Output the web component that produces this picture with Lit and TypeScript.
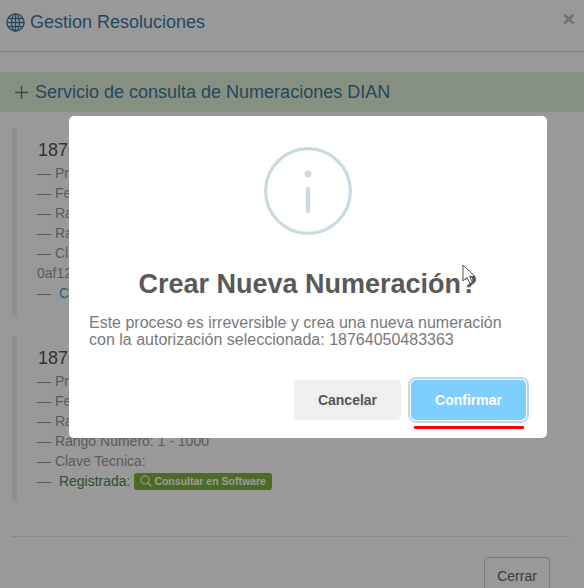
import { LitElement, html, css, svg } from "lit";
import { customElement } from "lit/decorators.js";

const FONT = css`"Liberation Sans", Arial, sans-serif`;

@customElement("app-root")
export class AppRoot extends LitElement {
  static styles = css`
    :host {
      display: block;
      position: relative;
      width: 584px;
      height: 588px;
      overflow: hidden;
      background: #fff;
      font-family: ${FONT};
      color: #999;
      font-size: 14px;
    }
    * { box-sizing: border-box; }
    .header {
      height: 52px;
      border-bottom: 1px solid #ddd;
      display: flex;
      align-items: center;
      padding: 0 9px 0 6px;
      color: #3d7ba8;
      font-size: 18px;
      gap: 5px;
    }
    .header span.t { flex: 1; margin-top: -7px; }
    .header svg { margin-top: -7px; }
    .close {
      font-size: 21px;
      font-weight: bold;
      color: #bbb;
      margin-top: -15px;
      line-height: 1;
    }
    .banner {
      margin-top: 20px;
      height: 40px;
      background: #dff0d8;
      color: #3a7a9c;
      font-size: 18px;
      display: flex;
      align-items: center;
      padding-left: 14px;
      gap: 6px;
    }
    .body { padding: 16px 12px 0; }
    .quote {
      border-left: 5px solid #eee;
      padding: 10px 0 0 20px;
      margin-bottom: 20px;
      font-size: 14px;
      line-height: 20px;
    }
    .q1 { height: 188px; }
    .q2 { height: 165px; }
    .num { font-size: 18px; line-height: 24px; color: #555; margin: 0 0 1px 1px; }
    .row { white-space: nowrap; }
    .link { color: #4a9ccc; margin-left: 4px; }
    .reg { color: #4d8a4e; margin-left: 4px; }
    .badge {
      display: inline-flex;
      align-items: center;
      gap: 2px;
      height: 17px;
      padding: 0 6px;
      background: #7fb53d;
      color: #fff;
      border-radius: 3px;
      font-size: 10.5px;
      font-weight: bold;
      position: relative;
      top: 1px;
    }
    .foot {
      margin: 35px 14px 0 12px;
      border-top: 1px solid #e5e5e5;
      padding-top: 20px;
      display: flex;
      justify-content: flex-end;
      padding-right: 20px;
    }
    .cerrar {
      width: 66px;
      height: 40px;
      border: 1px solid #ccc;
      border-radius: 4px;
      background: #fff;
      color: #666;
      font: 14px ${FONT};
      padding: 0 0 2px;
    }
    .overlay {
      position: absolute;
      inset: 0;
      background: rgba(0, 0, 0, 0.4);
    }
    .dialog {
      position: absolute;
      left: 69px;
      top: 116px;
      width: 478px;
      height: 322px;
      background: #fff;
      border-radius: 5px;
      padding: 20px 20px 0;
      display: flex;
      flex-direction: column;
    }
    .icon { display: block; flex: none; margin: 11px auto 0; }
    h2 {
      margin: 29px 0 0;
      text-align: center;
      font-size: 27px;
      line-height: 40px;
      font-weight: bold;
      color: #595959;
    }
    .msg {
      margin: 10px 0 0;
      font-size: 16px;
      line-height: 17px;
      color: #797979;
    }
    .actions {
      display: flex;
      justify-content: flex-end;
      gap: 10px;
      margin-top: 32px;
    }
    .btn {
      width: 107px;
      height: 40px;
      border: none;
      border-radius: 5px;
      font: bold 14px ${FONT};
    }
    .cancel { background: #efefef; color: #555; }
    .confirm {
      width: 115px;
      margin-right: 1px;
      background: #7ecfff;
      color: #fff;
      box-shadow: 0 0 0 1px #fff, 0 0 0 3px rgba(128, 190, 230, 0.55);
    }
    .underline {
      position: absolute;
      left: 414px;
      top: 426px;
      width: 110px;
      height: 3px;
      background: #f00;
      border-radius: 1px;
    }
    .cursor { position: absolute; left: 462px; top: 264px; }
  `;

  private globe() {
    return html`<svg width="19" height="19" viewBox="0 0 19 19" fill="none" stroke="#3d7ba8" stroke-width="1.3">
      <circle cx="9.5" cy="9.5" r="8.6"></circle>
      <ellipse cx="9.5" cy="9.5" rx="4" ry="8.6"></ellipse>
      <path d="M9.5 1v17M1 9.5h17M2 5.5h15M2 13.5h15"></path>
    </svg>`;
  }

  private plus() {
    return html`<svg width="15" height="15" viewBox="0 0 15 15" stroke="#5b8a5b" stroke-width="1.4">
      ${svg`<path d="M7.5 1v13M1 7.5h13"></path>`}
    </svg>`;
  }

  render() {
    return html`
      <div class="header">
        ${this.globe()}<span class="t">Gestion Resoluciones</span><span class="close">×</span>
      </div>
      <div class="banner">${this.plus()}<span>Servicio de consulta de Numeraciones DIAN</span></div>
      <div class="body">
        <div class="quote q1">
          <div class="num">18764050483363</div>
          <div class="row">— Prefijo: SETT</div>
          <div class="row">— Fecha: 2024-01-01</div>
          <div class="row">— Rango Factura</div>
          <div class="row">— Rango Numero: 1 - 1000</div>
          <div class="row">— Clave Tecnica:</div>
          <div class="row">0af12</div>
          <div class="row">— <span class="link">Consultar</span></div>
        </div>
        <div class="quote q2">
          <div class="num">18764050483363</div>
          <div class="row">— Prefijo: SETT</div>
          <div class="row">— Fecha: 2024-01-01</div>
          <div class="row">— Rango Factura</div>
          <div class="row">— Rango Numero: 1 - 1000</div>
          <div class="row">— Clave Tecnica:</div>
          <div class="row">— <span class="reg">Registrada:</span>
            <span class="badge">
              <svg width="12" height="12" viewBox="0 0 12 12" fill="none" stroke="#fff" stroke-width="1.1">
                <circle cx="5" cy="5" r="4"></circle><path d="M8 8l3.3 3.3"></path>
              </svg>Consultar en Software
            </span>
          </div>
        </div>
      </div>
      <div class="foot"><button class="cerrar">Cerrar</button></div>

      <div class="overlay"></div>
      <div class="dialog">
        <svg class="icon" width="88" height="88" viewBox="0 0 88 88" fill="none">
          <circle cx="44" cy="44" r="42.4" stroke="#c9dae1" stroke-width="3.2"></circle>
          <circle cx="44" cy="27" r="3.5" fill="#c9dae1"></circle>
          <path d="M44 42v22" stroke="#c9dae1" stroke-width="4.5" stroke-linecap="round"></path>
        </svg>
        <h2>Crear Nueva Numeración?</h2>
        <p class="msg">Este proceso es irreversible y crea una nueva numeración con la autorización seleccionada: 18764050483363</p>
        <div class="actions">
          <button class="btn cancel">Cancelar</button>
          <button class="btn confirm">Confirmar</button>
        </div>
      </div>
      <div class="underline"></div>
      <svg class="cursor" width="15" height="22" viewBox="0 0 15 22">
        <path d="M1 1v16l4-3.5 3 6 2.5-1.2-3-5.8h5.5z" fill="#fff" stroke="#555" stroke-width="1"></path>
      </svg>
    `;
  }
}
